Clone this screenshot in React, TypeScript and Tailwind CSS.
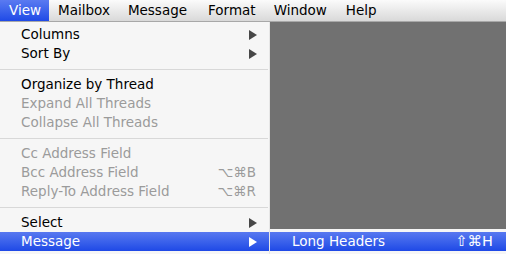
import React from "react";

const font = { fontFamily: '"DejaVu Sans", "Liberation Sans", sans-serif' };

function Arrow({ white }: { white?: boolean }) {
    return (
        <svg width="8" height="10" viewBox="0 0 8 10" className="shrink-0">
            <path d="M0 0 L8 5 L0 10 Z" fill={white ? "#ffffff" : "#474747"} />
        </svg>
    );
}

type Item = {
    label: string;
    disabled?: boolean;
    submenu?: boolean;
    shortcut?: string;
    active?: boolean;
};

const groups: Item[][] = [
    [
        { label: "Columns", submenu: true },
        { label: "Sort By", submenu: true },
    ],
    [
        { label: "Organize by Thread" },
        { label: "Expand All Threads", disabled: true },
        { label: "Collapse All Threads", disabled: true },
    ],
    [
        { label: "Cc Address Field", disabled: true },
        { label: "Bcc Address Field", disabled: true, shortcut: "⌥⌘B" },
        { label: "Reply-To Address Field", disabled: true, shortcut: "⌥⌘R" },
    ],
    [
        { label: "Select", submenu: true },
        { label: "Message", submenu: true, active: true },
    ],
];

function MenuRow({ item }: { item: Item }) {
    const color = item.active ? "text-white" : item.disabled ? "text-[#9b9b9b]" : "text-black";
    return (
        <div
            className={`flex h-[19px] items-center pl-[21px] pr-[12px] ${color} ${
                item.active ? "bg-gradient-to-b from-[#5878f0] to-[#1e48e6]" : ""
            }`}
        >
            <span className="flex-1 leading-none">{item.label}</span>
            {item.shortcut && <span className="leading-none text-[#9b9b9b] pr-[1px]">{item.shortcut}</span>}
            {item.submenu && <Arrow white={item.active} />}
        </div>
    );
}

export default function App() {
    return (
        <div className="relative w-[506px] h-[254px] overflow-hidden bg-[#717171] text-[13.5px]" style={font}>
            {/* menu bar */}
            <div className="flex h-[22px] items-stretch bg-gradient-to-b from-[#fbfbfb] to-[#d9d9d9] border-b border-[#a8a8a8]">
                <div className="flex items-center pl-[9px] pr-[8px] text-white bg-gradient-to-b from-[#5a7af1] to-[#1f49e6]">
                    View
                </div>
                <div className="flex items-center px-[9px] text-black">Mailbox</div>
                <div className="flex items-center pl-[9px] pr-[12px] text-black">Message</div>
                <div className="flex items-center px-[9px] text-black">Format</div>
                <div className="flex items-center pl-[9px] pr-[10px] text-black">Window</div>
                <div className="flex items-center px-[9px] text-black">Help</div>
            </div>

            <div className="flex">
                {/* dropdown */}
                <div className="w-[270px] h-[232px] bg-[#f6f6f6] pt-[3px] border-r border-[#e6e6e6]">
                    {groups.map((g, i) => (
                        <div key={i}>
                            {i > 0 && (
                                <div className="h-[12px] flex items-center">
                                    <div className="h-px w-[268px] bg-[#d8d8d8]" />
                                </div>
                            )}
                            {g.map((it) => (
                                <MenuRow key={it.label} item={it} />
                            ))}
                        </div>
                    ))}
                </div>
                <div className="flex-1" />
            </div>

            {/* submenu */}
            <div className="absolute left-[270px] top-[229px] w-[236px] h-[30px] bg-[#f6f6f6] pt-[3px]">
                <div className="flex h-[19px] items-center pl-[22px] pr-[13px] text-white bg-gradient-to-b from-[#5878f0] to-[#1e48e6]">
                    <span className="flex-1 leading-none">Long Headers</span>
                    <span className="leading-none text-[14.5px]">⇧⌘H</span>
                </div>
            </div>
        </div>
    );
}
